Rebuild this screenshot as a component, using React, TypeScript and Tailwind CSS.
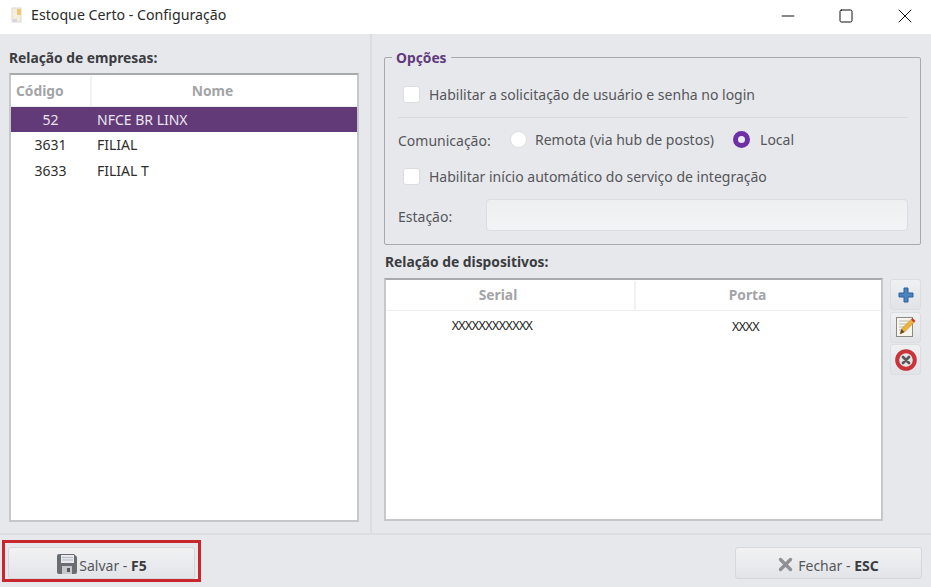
import { Minus, Square, X } from "lucide-react";

const font = "font-['Noto_Sans',sans-serif]";

function FloppyIcon() {
  return (
    <svg width="22" height="22" viewBox="0 0 22 22" aria-hidden>
      <path d="M1 3a2 2 0 0 1 2-2h15l3 3v15a2 2 0 0 1-2 2H3a2 2 0 0 1-2-2z" fill="#6a6d72" />
      <rect x="5" y="2" width="13" height="8" fill="#e8eaee" />
      <path d="M6 4.500h11M6 7h11" stroke="#b5bac2" strokeWidth="1" />
      <rect x="6" y="13" width="10" height="8" fill="#c6c8cb" />
      <rect x="11" y="15" width="3" height="4" fill="#55585c" />
    </svg>
  );
}

function PlusIcon() {
  return (
    <svg width="18" height="18" viewBox="0 0 18 18" aria-hidden>
      <path
        d="M7 2h4v5h5v4h-5v5H7v-5H2V7h5z"
        fill="#4a83c0"
        stroke="#2f5f98"
        strokeWidth="1"
        strokeLinejoin="round"
      />
    </svg>
  );
}

function EditIcon() {
  return (
    <svg width="22" height="22" viewBox="0 0 22 22" aria-hidden>
      <rect x="1.500" y="1.500" width="16" height="19" fill="#f7f5ec" stroke="#8a8a84" />
      <path d="M4 5h10M4 8h8M4 11h6M4 14h4" stroke="#b9b8b0" strokeWidth="1" />
      <path d="M5 18l1.500-5L16 3.500l3 3L9.500 16z" fill="#eeb23c" stroke="#c58a22" strokeWidth="0.600" />
      <path d="M16 3.500l1.500-1.500 3 3L19 6.500z" fill="#c9372f" />
      <path d="M5 18l1.500-5 3 3z" fill="#5b4a35" />
    </svg>
  );
}

function DeleteIcon() {
  return (
    <svg width="24" height="24" viewBox="0 0 24 24" aria-hidden>
      <circle cx="12" cy="12" r="8.800" fill="#e6e4e4" stroke="#c9343a" strokeWidth="4" />
      <path d="M9 9l6 6M15 9l-6 6" stroke="#55585c" strokeWidth="2.800" strokeLinecap="round" />
    </svg>
  );
}

function CloseGlyph() {
  return (
    <svg width="15" height="15" viewBox="0 0 15 15" aria-hidden>
      <path d="M2.500 2.500l10 10M12.500 2.500l-10 10" stroke="#8e9094" strokeWidth="3.400" strokeLinecap="round" />
    </svg>
  );
}

function AppIcon() {
  return (
    <svg width="14" height="16" viewBox="0 0 14 16" aria-hidden>
      <rect x="2" y="1" width="9" height="14" fill="#f4eedc" stroke="#ddd9d2" />
      <rect x="7" y="2" width="4" height="6" fill="#eec878" />
      <rect x="3" y="12" width="4" height="3" fill="#d9d3e6" />
    </svg>
  );
}

function Checkbox() {
  return <span className="h-[17px] w-[17px] shrink-0 rounded-[3px] border border-[#dcdde1] bg-white" />;
}

const empresas = [
  { codigo: "52", nome: "NFCE BR LINX", selected: true },
  { codigo: "3631", nome: "FILIAL", selected: false },
  { codigo: "3633", nome: "FILIAL T", selected: false },
];

function ToolButton({ children }: { children: React.ReactNode }) {
  return (
    <button
      type="button"
      className="flex h-[31px] w-[31px] items-center justify-center rounded-[3px] border border-[#dcdde2] bg-gradient-to-b from-[#eff0f2] to-[#e2e3e7]"
    >
      {children}
    </button>
  );
}

export default function App() {
  return (
    <div className={`flex h-[587px] w-[931px] flex-col overflow-hidden bg-[#e7e8ec] ${font}`}>
      {/* Title bar */}
      <div className="flex h-[34px] shrink-0 items-center bg-white pl-[10px] pb-[4px]">
        <AppIcon />
        <span className="ml-[7px] text-[14.200px] text-[#2b2b2b]">Estoque Certo - Configuração</span>
        <div className="ml-auto flex items-center pt-[2px] text-[#111]">
          <span className="flex w-[50px] justify-center">
            <Minus size={20} strokeWidth={1.200} />
          </span>
          <span className="flex w-[66px] justify-center">
            <Square size={16} strokeWidth={1.500} absoluteStrokeWidth={false} />
          </span>
          <span className="flex w-[52px] justify-center">
            <X size={24} strokeWidth={1} />
          </span>
        </div>
      </div>

      {/* Body */}
      <div className="flex h-[501px] shrink-0 border-b-2 border-[#dcdde1]">
        {/* Left panel */}
        <div className="flex w-[372px] shrink-0 flex-col border-r-2 border-[#dcdde1] pl-[9px] pr-[12px] pt-[14px]">
          <p className="h-[25px] text-[13.800px] font-bold leading-[20px] text-[#3a3c40]">Relação de empresas:</p>
          <div className="flex h-[449px] w-[350px] flex-col border-2 border-[#c6c7cb] border-t-[#a8a9ad] bg-white">
            <div className="flex h-[32px] shrink-0 items-center border-b border-[#eceded] pt-[1px] text-[13.800px] font-bold text-[#a3a4a8]">
              <span className="flex h-full w-[81px] items-center border-r-2 border-[#f0f1f2] pl-[5px]">Código</span>
              <span className="flex-1 pr-[24px] text-center">Nome</span>
            </div>
            {empresas.map((e) => (
              <div
                key={e.codigo}
                className={
                  e.selected
                    ? "flex h-[25px] items-center bg-[#623a78] text-[14px] text-[#ece6f0]"
                    : "flex h-[25.500px] items-center text-[14px] text-[#2e2e2e]"
                }
              >
                <span className="w-[79px] text-center">{e.codigo}</span>
                <span className="pl-[7px]">{e.nome}</span>
              </div>
            ))}
          </div>
        </div>

        {/* Right panel */}
        <div className="flex flex-1 flex-col pl-[12px] pr-[9px] pt-[23px]">
          <div className="relative h-[188px] w-[537px] shrink-0 rounded-[2px] border border-[#a9aaae] pl-[13px] pr-[12px] pt-[24px]">
            <span className="absolute -top-[9px] left-[7px] bg-[#e7e8ec] px-[4px] text-[13.800px] font-bold leading-[17px] text-[#5f3a7c]">
              Opções
            </span>
            <div className="flex h-[24px] items-center pl-[5px] text-[14px] text-[#55565a]">
              <Checkbox />
              <span className="ml-[9px]">Habilitar a solicitação de usuário e senha no login</span>
            </div>
            <div className="mt-[11px] h-px w-full bg-[#d8d9dd]" />
            <div className="mt-[9px] flex h-[24px] items-center text-[14px] text-[#55565a]">
              <span className="w-[112px] pt-[2px]">Comunicação:</span>
              <span className="h-[17px] w-[17px] shrink-0 rounded-full border border-[#dcdde1] bg-white" />
              <span className="ml-[8px]">Remota (via hub de postos)</span>
              <span className="ml-[19px] h-[17px] w-[17px] shrink-0 rounded-full border-[5px] border-[#6f2fa5] bg-[#ececf2]" />
              <span className="ml-[10px]">Local</span>
            </div>
            <div className="mt-[13px] flex h-[24px] items-center pl-[5px] text-[14px] text-[#55565a]">
              <Checkbox />
              <span className="ml-[9px]">Habilitar início automático do serviço de integração</span>
            </div>
            <div className="mt-[11px] flex h-[32px] items-center text-[14px] text-[#55565a]">
              <span className="w-[88px] pt-[2px]">Estação:</span>
              <div className="h-full flex-1 rounded-[4px] border border-[#dcdde1] bg-gradient-to-b from-[#eeeff1] to-[#f2f3f5]" />
            </div>
          </div>

          <p className="mt-[7px] h-[26px] pl-px text-[13.800px] font-bold leading-[20px] text-[#3a3c40]">Relação de dispositivos:</p>
          <div className="flex gap-[7px]">
            <div className="flex h-[243px] w-[499px] shrink-0 flex-col border-2 border-[#c6c7cb] border-t-[#a8a9ad] bg-white">
              <div className="flex h-[31px] shrink-0 items-center border-b border-[#eceded] pt-[1px] text-[13.800px] font-bold text-[#a3a4a8]">
                <span className="flex h-full w-[250px] items-center justify-center border-r-2 border-[#f0f1f2] pr-[24px]">Serial</span>
                <span className="flex-1 pr-[22px] text-center">Porta</span>
              </div>
              <div className="flex h-[33px] items-center text-[12.500px] tracking-[-0.600px] text-[#222]">
                <span className="w-[212px] pb-[3px] text-center">XXXXXXXXXXXX</span>
                <span className="flex-1 pl-[12px] text-center">XXXX</span>
              </div>
            </div>
            <div className="flex flex-col gap-[1.500px] pt-[1px]">
              <ToolButton>
                <PlusIcon />
              </ToolButton>
              <ToolButton>
                <EditIcon />
              </ToolButton>
              <ToolButton>
                <DeleteIcon />
              </ToolButton>
            </div>
          </div>
        </div>
      </div>

      {/* Footer */}
      <div className="relative flex flex-1 items-start justify-between pl-[8px] pr-[9px] pt-[12px]">
        <button
          type="button"
          className="flex h-[32px] w-[187px] items-center justify-center rounded-[3px] border border-[#d6d7db] bg-gradient-to-b from-[#f2f2f4] to-[#e3e4e8] pt-[2px] text-[14px] text-[#55565a]"
        >
          <FloppyIcon />
          <span className="ml-px pt-[2px]">
            Salvar - <b className="text-[#3a3c40]">F5</b>
          </span>
        </button>
        <button
          type="button"
          className="flex h-[32px] w-[187px] items-center justify-center rounded-[3px] border border-[#d6d7db] bg-gradient-to-b from-[#f2f2f4] to-[#e3e4e8] pt-[2px] text-[14px] text-[#55565a]"
        >
          <CloseGlyph />
          <span className="ml-[5px] pt-[2px]">
            Fechar - <b className="text-[#3a3c40]">ESC</b>
          </span>
        </button>
        {/* Red annotation over the save button */}
        <div className="pointer-events-none absolute left-[2px] top-[5px] h-[42px] w-[199px] border-[3px] border-[#c8262f]" />
      </div>
    </div>
  );
}
